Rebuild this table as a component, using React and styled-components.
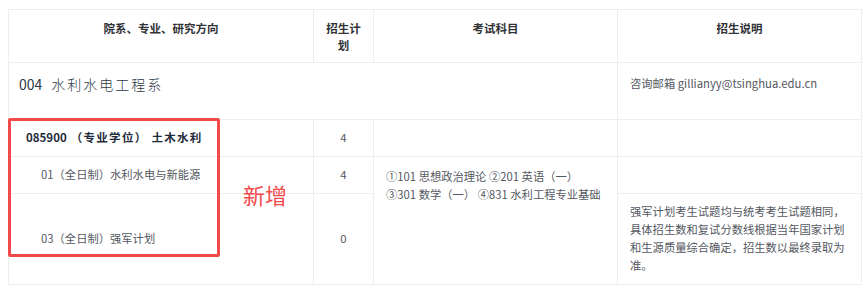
import React from "react";
import styled, { createGlobalStyle } from "styled-components";

const Global = createGlobalStyle`
  html, body { margin: 0; padding: 0; background: #fff; }
  body { font-family: "Noto Sans CJK SC", "Noto Sans", sans-serif; }
`;

const Page = styled.div`
  padding: 9px 0 0 8px;
`;

const Frame = styled.div`
  position: relative;
  width: 853px;
`;

const Table = styled.table`
  width: 853px;
  border-collapse: collapse;
  table-layout: fixed;
  font-size: 11.3px;
  color: #54585f;
`;

const Col = styled.col`
  width: ${(p) => p.$w}px;
`;

const Th = styled.th`
  border: 1px solid #eceef2;
  padding: 10px 8px 0;
  height: 53px;
  box-sizing: border-box;
  vertical-align: top;
  font-weight: 700;
  font-size: 11.5px;
  line-height: 17px;
  color: #303236;
  text-align: center;
`;

const Td = styled.td`
  border: 1px solid #eceef2;
  box-sizing: border-box;
  height: ${(p) => p.$h}px;
  padding: ${(p) => (p.$top ? "11px 12px 0" : "0 12px")};
  padding-left: ${(p) => p.$indent ?? 12}px;
  vertical-align: ${(p) => (p.$top ? "top" : "middle")};
  text-align: ${(p) => (p.$center ? "center" : "left")};
  line-height: 17.8px;
`;

const Dept = styled.span`
  font-size: 14px;
  line-height: 20px;
  color: #2d3946;
  font-weight: 400;
`;

const DeptName = styled.span`
  letter-spacing: 2px;
  margin-left: 9px;
  font-weight: 300;
`;

const Major = styled.span`
  font-weight: 700;
  font-size: 11.5px;
  color: #1f2b3a;
`;

const MajorCn = styled.span`
  letter-spacing: 1.3px;
  margin-left: 4px;
`;

const Email = styled.div`
  padding-top: 1px;
`;

const Note = styled.div`
  line-height: 17.8px;
`;

const Highlight = styled.div`
  position: absolute;
  left: 0;
  top: 109px;
  width: 212px;
  height: 139px;
  box-sizing: border-box;
  border: 3px solid #f2494b;
  border-radius: 2px;
  pointer-events: none;
`;

const Tag = styled.div`
  position: absolute;
  left: 235px;
  top: 170px;
  font-size: 22px;
  line-height: 30px;
  color: #f2494b;
  font-weight: 400;
`;

export default function App() {
  return (
    <>
      <Global />
      <Page>
        <Frame>
          <Table>
            <colgroup>
              <Col $w={305} />
              <Col $w={60} />
              <Col $w={244} />
              <Col $w={244} />
            </colgroup>
            <thead>
              <tr>
                <Th>院系、专业、研究方向</Th>
                <Th>招生计划</Th>
                <Th>考试科目</Th>
                <Th>招生说明</Th>
              </tr>
            </thead>
            <tbody>
              <tr>
                <Td $h={57} $top $indent={10} colSpan={3}>
                  <Dept>
                    004<DeptName>水利水电工程系</DeptName>
                  </Dept>
                </Td>
                <Td $h={57} $top>
                  <Email>咨询邮箱 gillianyy@tsinghua.edu.cn</Email>
                </Td>
              </tr>
              <tr>
                <Td $h={37} $indent={17}>
                  <Major>
                    085900
                    <MajorCn>（专业学位） 土木水利</MajorCn>
                  </Major>
                </Td>
                <Td $h={37} $center>4</Td>
                <Td $h={37} />
                <Td $h={37} />
              </tr>
              <tr>
                <Td $h={37} $indent={32}>01（全日制）水利水电与新能源</Td>
                <Td $h={37} $center>4</Td>
                <Td rowSpan={2} $top>
                  ①101 思想政治理论 ②201 英语（一）
                  <br />
                  ③301 数学（一） ④831 水利工程专业基础
                </Td>
                <Td $h={37} />
              </tr>
              <tr>
                <Td $h={91} $indent={32}>03（全日制）强军计划</Td>
                <Td $h={91} $center>0</Td>
                <Td $h={91}>
                  <Note>
                    强军计划考生试题均与统考考生试题相同，具体招生数和复试分数线根据当年国家计划和生源质量综合确定，招生数以最终录取为准。
                  </Note>
                </Td>
              </tr>
            </tbody>
          </Table>
          <Highlight />
          <Tag>新增</Tag>
        </Frame>
      </Page>
    </>
  );
}
